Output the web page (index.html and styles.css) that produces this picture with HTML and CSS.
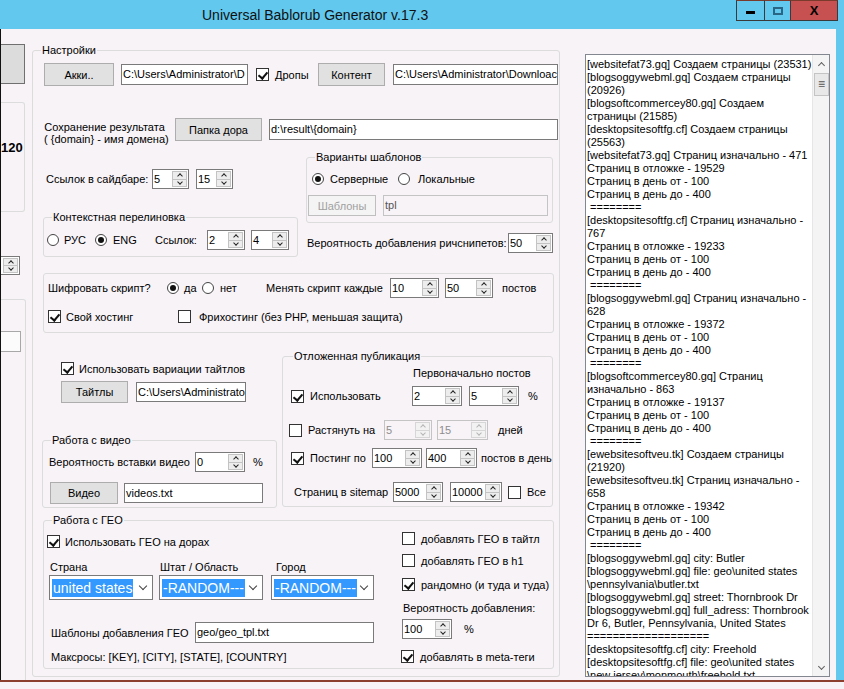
FILE: index.html
```html
<!DOCTYPE html>
<html lang="ru">
<head>
  <meta charset="UTF-8">
  <title>Universal Bablorub Generator v.17.3</title>
  <link rel="stylesheet" href="styles.css">
</head>
<body>
<div class="window">
  <!--заголовок окна-->
  <div class="titlebar">
    <div class="title">Universal Bablorub Generator v.17.3</div>
    <div class="sysbtns">
      <div class="sysbtn min"><i></i></div>
      <div class="sysbtn max"><i></i></div>
      <div class="sysbtn close">X</div>
    </div>
  </div>

  <div class="client">
    <!--левая панель, обрезана краем экрана-->
    <div class="side">
      <div class="s-btn"></div>
      <div class="s-grp">120</div>
      <div class="s-spin"><b class="arr"><i class="up"></i><i class="dn"></i></b></div>
      <div class="s-grp2"><div class="s-tb"></div></div>
    </div>

    <!--настройки-->
    <div class="grp main">
      <div class="cap">Настройки</div>

      <div class="row-a">
        <div class="btn b-akki">Акки..</div>
        <div class="tb t-akki">C:\Users\Administrator\D</div>
        <i class="cb on cb-drop"></i>
        <span class="l-drop">Дропы</span>
        <div class="btn b-kont">Контент</div>
        <div class="tb t-kont">C:\Users\Administrator\Downloac</div>
      </div>

      <div class="row-b">
        <div class="l-save">Сохранение результата<br>( {domain} - имя домена)</div>
        <div class="btn b-dir">Папка дора</div>
        <div class="tb t-dir">d:\result\{domain}</div>
      </div>

      <div class="row-c">
        <div class="col-l">
          <div class="links">
            <span class="l-links">Ссылок в сайдбаре:</span>
            <div class="spin w37"><span>5</span><b class="arr"><i class="up"></i><i class="dn"></i></b></div>
            <div class="spin w37 sp-links2"><span>15</span><b class="arr"><i class="up"></i><i class="dn"></i></b></div>
          </div>

          <div class="grp ctx">
            <div class="cap">Контекстная перелиновка</div>
            <div class="ctx-row">
              <i class="rb rb-rus"></i><span class="l-rus">РУС</span>
              <i class="rb on"></i><span class="l-eng">ENG</span>
              <span class="l-cnt">Ссылок:</span>
              <div class="spin w38"><span>2</span><b class="arr"><i class="up"></i><i class="dn"></i></b></div>
              <div class="spin w38 sp-ctx2"><span>4</span><b class="arr"><i class="up"></i><i class="dn"></i></b></div>
            </div>
          </div>
        </div>

        <div class="col-r">
          <div class="grp tpls">
            <div class="cap">Варианты шаблонов</div>
            <div class="tpl-row1">
              <i class="rb on rb-srv"></i><span class="l-srv">Серверные</span>
              <i class="rb"></i><span class="l-loc">Локальные</span>
            </div>
            <div class="tpl-row2">
              <div class="btn off b-tpl">Шаблоны</div>
              <div class="tb off t-tpl">tpl</div>
            </div>
          </div>
          <div class="rich">
            <span class="l-rich">Вероятность добавления ричснипетов:</span>
            <div class="spin w45"><span>50</span><b class="arr"><i class="up"></i><i class="dn"></i></b></div>
          </div>
        </div>
      </div>

      <div class="grp enc">
        <div class="enc-row1">
          <span class="l-enc">Шифровать скрипт?</span>
          <i class="rb on"></i><span class="l-yes">да</span>
          <i class="rb"></i><span class="l-no">нет</span>
          <span class="l-every">Менять скрипт каждые</span>
          <div class="spin w49"><span>10</span><b class="arr"><i class="up"></i><i class="dn"></i></b></div>
          <div class="spin w48 sp-enc2"><span>50</span><b class="arr"><i class="up"></i><i class="dn"></i></b></div>
          <span class="l-posts">постов</span>
        </div>
        <div class="enc-row2">
          <i class="cb on cb-own"></i><span class="l-own">Свой хостинг</span>
          <i class="cb"></i><span class="l-free">Фрихостинг (без PHP, меньшая защита)</span>
        </div>
      </div>

      <div class="row-e">
        <div class="col-l2">
          <div class="ttl-check">
            <i class="cb on cb-ttl"></i><span class="l-ttl">Использовать вариации тайтлов</span>
          </div>
          <div class="ttl-row">
            <div class="btn b-ttl">Тайтлы</div>
            <div class="tb t-ttl">C:\Users\Administrato</div>
          </div>

          <div class="grp video">
            <div class="cap">Работа с видео</div>
            <div class="v-row1">
              <span class="l-vprob">Вероятность вставки видео</span>
              <div class="spin w50"><span>0</span><b class="arr"><i class="up"></i><i class="dn"></i></b></div>
              <span class="l-pct">%</span>
            </div>
            <div class="v-row2">
              <div class="btn b-video">Видео</div>
              <div class="tb t-video">videos.txt</div>
            </div>
          </div>
        </div>

        <div class="col-r2">
          <div class="grp delay">
            <div class="cap">Отложенная публикация</div>
            <div class="first-posts">Первоначально постов</div>
            <div class="d-row1">
              <i class="cb on cb-d1"></i><span class="l-use">Использовать</span>
              <div class="spin w50"><span>2</span><b class="arr"><i class="up"></i><i class="dn"></i></b></div>
              <div class="spin w50 sp-d1"><span>5</span><b class="arr"><i class="up"></i><i class="dn"></i></b></div>
              <span class="l-pct2">%</span>
            </div>
            <div class="d-row2">
              <i class="cb cb-d2"></i><span class="l-stretch">Растянуть на</span>
              <div class="spin off w48"><span>5</span><b class="arr"><i class="up"></i><i class="dn"></i></b></div>
              <div class="spin off w51 sp-d2"><span>15</span><b class="arr"><i class="up"></i><i class="dn"></i></b></div>
              <span class="l-days">дней</span>
            </div>
            <div class="d-row3">
              <i class="cb on cb-d1"></i><span class="l-post">Постинг по</span>
              <div class="spin w50"><span>100</span><b class="arr"><i class="up"></i><i class="dn"></i></b></div>
              <div class="spin w51 sp-d3"><span>400</span><b class="arr"><i class="up"></i><i class="dn"></i></b></div>
              <span class="l-perday">постов в день</span>
            </div>
            <div class="d-row4">
              <span class="l-sitemap">Страниц в sitemap</span>
              <div class="spin w50"><span>5000</span><b class="arr"><i class="up"></i><i class="dn"></i></b></div>
              <div class="spin w52 sp-d4"><span>10000</span><b class="arr"><i class="up"></i><i class="dn"></i></b></div>
              <i class="cb cb-all"></i><span class="l-all">Все</span>
            </div>
          </div>
        </div>
      </div>

      <div class="grp geo">
        <div class="cap">Работа с ГЕО</div>
        <div class="geo-in">
          <div class="geo-l">
            <div class="geo-check">
              <i class="cb on cb-geo"></i><span class="l-geo">Использовать ГЕО на дорах</span>
            </div>
            <div class="geo-labels">
              <span class="l-country">Страна</span>
              <span class="l-state">Штат / Область</span>
              <span>Город</span>
            </div>
            <div class="geo-sel">
              <div class="sel s-country"><span class="hl">united states</span></div>
              <div class="sel s-state"><span class="hl">-RANDOM---</span></div>
              <div class="sel s-city"><span class="hl">-RANDOM---</span></div>
            </div>
            <div class="geo-tpl">
              <span class="l-gtpl">Шаблоны добавления ГЕО</span>
              <div class="tb t-gtpl">geo/geo_tpl.txt</div>
            </div>
            <div class="macros">Максросы: [KEY], [CITY], [STATE], [COUNTRY]</div>
          </div>

          <div class="geo-r">
            <div class="g-r1"><i class="cb"></i><span class="l-gr">добавлять ГЕО в тайтл</span></div>
            <div class="g-r2"><i class="cb"></i><span class="l-gr">добавлять ГЕО в h1</span></div>
            <div class="g-r3"><i class="cb on"></i><span class="l-gr">рандомно (и туда и туда)</span></div>
            <div class="g-prob">Вероятность добавления:</div>
            <div class="g-spin">
              <div class="spin w50"><span>100</span><b class="arr"><i class="up"></i><i class="dn"></i></b></div>
              <span class="l-gpct">%</span>
            </div>
            <div class="g-r4"><i class="cb on"></i><span class="l-gr">добавлять в meta-теги</span></div>
          </div>
        </div>
      </div>
    </div>

    <!--лог-->
    <div class="log">
      <div class="lines">[websitefat73.gq] Создаем страницы (23531)
[blogsoggywebml.gq] Создаем страницы
(20926)
[blogsoftcommercey80.gq] Создаем
страницы (21585)
[desktopsitesoftfg.cf] Создаем страницы
(25563)
[websitefat73.gq] Страниц изначально - 471
Страниц в отложке - 19529
Страниц в день от - 100
Страниц в день до - 400
 ========
[desktopsitesoftfg.cf] Страниц изначально -
767
Страниц в отложке - 19233
Страниц в день от - 100
Страниц в день до - 400
 ========
[blogsoggywebml.gq] Страниц изначально -
628
Страниц в отложке - 19372
Страниц в день от - 100
Страниц в день до - 400
 ========
[blogsoftcommercey80.gq] Страниц
изначально - 863
Страниц в отложке - 19137
Страниц в день от - 100
Страниц в день до - 400
 ========
[ewebsitesoftveu.tk] Создаем страницы
(21920)
[ewebsitesoftveu.tk] Страниц изначально -
658
Страниц в отложке - 19342
Страниц в день от - 100
Страниц в день до - 400
 ========
[blogsoggywebml.gq] city: Butler
[blogsoggywebml.gq] file: geo\united states
\pennsylvania\butler.txt
[blogsoggywebml.gq] street: Thornbrook Dr
[blogsoggywebml.gq] full_adress: Thornbrook
Dr 6, Butler, Pennsylvania, United States
===================
[desktopsitesoftfg.cf] city: Freehold
[desktopsitesoftfg.cf] file: geo\united states
\new jersey\monmouth\freehold.txt</div>
      <div class="vscroll">
        <div class="sb-up"><i></i></div>
        <div class="sb-thumb">≡</div>
        <div class="sb-track"></div>
        <div class="sb-dn"><i></i></div>
      </div>
    </div>
  </div>
  <div class="bottom"></div>
</div>
</body>
</html>
```

FILE: styles.css
```css
*{box-sizing:border-box;}
body{margin:0;font:11px "Liberation Sans",Arial,sans-serif;color:#000;}

.window{
  width:844px;
  height:689px;
  overflow:hidden;
  background:#62c8ee;
}

/* заголовок */
.titlebar{
  display:flex;
  align-items:flex-start;
  height:29px;
}
.title{
  padding-left:202px;
  line-height:30px;
  font-size:14px;
  color:#111;
}
.sysbtns{
  display:flex;
  margin:0 6px 0 auto;
}
.sysbtn{
  display:flex;
  align-items:center;
  justify-content:center;
  height:21px;
  border:1px solid #3a3a3a;
  border-top-color:#7a3a2c;
}
.sysbtn + .sysbtn{border-left:none;}
.sysbtn.min{width:29px;}
.sysbtn.max{width:26px;}
.sysbtn.close{
  width:47px;
  background:#c75050;
  font:bold 13px "Liberation Sans",Arial,sans-serif;
}
.sysbtn.min i{width:9px;height:3px;margin-top:4px;background:#000;}
.sysbtn.max i{width:10px;height:8px;border:2px solid #2a6585;}

/* клиентская область */
.client{
  display:flex;
  align-items:flex-start;
  width:836px;
  height:651px;
  background:#f7f3f7;
  border-left:1px solid #111;
}
.bottom{
  height:9px;
  background:#f7f3f7;
  border-top:2px solid #8c3f2e;
}

/* левая обрезанная панель */
.side{
  flex-shrink:0;
  width:31px;
  height:651px;
  overflow:hidden;
}
.s-btn{
  width:24px;
  height:40px;
  margin-top:15px;
  background:#dcdcdc;
  border:1px solid #707070;
  border-left:none;
}
.s-grp{
  width:24px;
  height:110px;
  margin-top:18px;
  padding:37px 4px 0 0;
  border:1px solid #dcdcdc;
  border-left:none;
  border-radius:0 3px 3px 0;
  text-align:right;
  font-size:13px;
  line-height:15px;
  font-weight:bold;
}
.s-spin{
  display:flex;
  justify-content:flex-end;
  width:19px;
  height:19px;
  margin-top:44px;
  border:1px solid #7a7a7a;
  border-left:none;
  background:#fff;
}
.s-grp2{
  width:25px;
  height:400px;
  margin-top:24px;
  padding-top:31px;
  border:1px solid #dcdcdc;
  border-left:none;
  border-radius:0 3px 0 0;
}
.s-tb{
  width:20px;
  height:21px;
  border:1px solid #a8a8a8;
  border-left:none;
  background:#fbfbfb;
}

/* общие элементы */
.grp{
  border:1px solid #dcdcdc;
  border-radius:3px;
}
.cap{
  width:fit-content;
  margin:-7px 0 0 8px;
  padding:0 1px;
  line-height:13px;
  background:#f7f3f7;
}
.btn{
  display:flex;
  align-items:center;
  justify-content:center;
  height:23px;
  background:#e1e1e1;
  border:1px solid #adadad;
  white-space:nowrap;
}
.btn.off{background:#f4f4f4;border-color:#bfbfbf;color:#a0a0a0;}
.tb{
  height:21px;
  padding-left:1px;
  line-height:19px;
  background:#fff;
  border:1px solid #7a7a7a;
  white-space:nowrap;
  overflow:hidden;
}
.tb.off{background:#f7f3f7;border-color:#c4c4c4;color:#555;}
.cb{
  flex-shrink:0;
  display:block;
  width:13px;
  height:13px;
  background:#fff;
  border:1px solid #333;
}
.cb.on::after{
  content:"";
  display:block;
  width:4px;
  height:7px;
  margin:1px 0 0 3px;
  border:solid #111;
  border-width:0 2px 2px 0;
  transform:rotate(40deg);
}
.rb{
  flex-shrink:0;
  display:block;
  width:12px;
  height:12px;
  background:#fff;
  border:1px solid #444;
  border-radius:50%;
}
.rb.on::after{
  content:"";
  display:block;
  width:6px;
  height:6px;
  margin:2px;
  background:#111;
  border-radius:50%;
}
.spin{
  flex-shrink:0;
  display:flex;
  height:20px;
  background:#fff;
  border:1px solid #7a7a7a;
}
.spin span{
  flex:1;
  padding-left:1px;
  line-height:18px;
  white-space:nowrap;
  overflow:hidden;
}
.spin.off{background:#f7f3f7;border-color:#c4c4c4;color:#8d8d8d;}
.arr{
  display:flex;
  flex-direction:column;
  width:16px;
  padding:1px 1px 1px 0;
}
.arr i{
  flex:1;
  display:flex;
  align-items:center;
  justify-content:center;
  background:#ededed;
  border:1px solid #c3c3c3;
}
.arr i + i{border-top:none;}
.arr i::after{
  content:"";
  width:3px;
  height:3px;
  border-left:1px solid #222;
  border-top:1px solid #222;
}
.arr .up::after{transform:rotate(45deg);margin-top:2px;}
.arr .dn::after{transform:rotate(225deg);margin-top:-2px;}
.spin.off .arr i::after{border-color:#b5b5b5;}
.spin.off .arr i{background:#f2f2f2;border-color:#d6d6d6;}
.sel{
  display:flex;
  align-items:center;
  height:25px;
  padding-left:2px;
  background:#fff;
  border:1px solid #7a7a7a;
}
.sel .hl{
  padding:0 1px;
  font-size:14px;
  line-height:18px;
  color:#fff;
  background:#3399ff;
  white-space:nowrap;
}
.sel::after{
  content:"";
  flex-shrink:0;
  width:5px;
  height:5px;
  margin:-3px 6px 0 auto;
  border-right:1px solid #444;
  border-bottom:1px solid #444;
  transform:rotate(45deg);
}
.w37{width:37px;}
.w38{width:38px;}
.w45{width:45px;}
.w48{width:48px;}
.w49{width:49px;}
.w50{width:50px;}
.w51{width:51px;}
.w52{width:52px;}
span{white-space:nowrap;}

/* группа Настройки */
.main{
  flex-shrink:0;
  width:528px;
  height:627px;
  margin-top:21px;
}
.row-a{
  display:flex;
  align-items:center;
  height:23px;
  margin-top:6px;
}
.b-akki{margin-left:11px;width:70px;}
.t-akki{margin-left:7px;width:127px;}
.cb-drop{margin-left:8px;}
.l-drop{margin-left:6px;width:43px;}
.b-kont{width:67px;}
.t-kont{margin-left:8px;width:165px;}

.row-b{
  display:flex;
  align-items:flex-start;
  height:23px;
  margin-top:32px;
}
.l-save{
  width:121px;
  margin:3px 0 0 11px;
  line-height:12px;
  text-align:center;
  white-space:nowrap;
}
.b-dir{margin-left:10px;width:87px;}
.t-dir{margin:1px 0 0 7px;width:289px;}

.row-c{display:flex;align-items:flex-start;}
.col-l{width:255px;margin-left:10px;}
.links{
  display:flex;
  align-items:center;
  height:20px;
  margin-top:28px;
}
.l-links{margin-left:3px;width:106px;}
.sp-links2{margin-left:7px;}
.ctx{height:40px;margin-top:28px;}
.ctx-row{
  display:flex;
  align-items:center;
  height:20px;
  margin-top:6px;
}
.rb-rus{margin-left:3px;}
.l-rus{margin-left:5px;width:31px;}
.l-eng{margin-left:6px;width:42px;}
.l-cnt{width:52px;}
.sp-ctx2{margin-left:6px;}

.col-r{width:247px;margin-left:8px;}
.tpls{height:66px;margin-top:16px;}
.tpl-row1{
  display:flex;
  align-items:center;
  height:16px;
  margin-top:7px;
}
.rb-srv{margin-left:5px;}
.l-srv{margin-left:6px;width:68px;}
.l-loc{margin-left:8px;}
.tpl-row2{
  display:flex;
  align-items:center;
  height:21px;
  margin-top:8px;
}
.b-tpl{margin-left:1px;width:68px;height:21px;}
.t-tpl{margin-left:7px;width:165px;}
.rich{
  display:flex;
  align-items:center;
  height:20px;
  margin-top:10px;
}
.l-rich{margin-left:1px;width:201px;}

.enc{width:511px;height:60px;margin:16px 0 0 10px;}
.enc-row1{
  display:flex;
  align-items:center;
  height:20px;
  margin-top:4px;
}
.l-enc{margin-left:4px;width:119px;}
.l-yes{margin-left:5px;width:18px;}
.l-no{margin-left:6px;width:46px;}
.l-every{width:124px;}
.sp-enc2{margin-left:6px;}
.l-posts{margin-left:9px;}
.enc-row2{
  display:flex;
  align-items:center;
  height:13px;
  margin-top:12px;
}
.cb-own{margin-left:4px;}
.l-own{margin-left:5px;width:112px;}
.l-free{margin-left:8px;}

.row-e{display:flex;align-items:flex-start;}
.col-l2{width:235px;margin-left:9px;}
.ttl-check{
  display:flex;
  align-items:center;
  height:13px;
  margin-top:29px;
}
.cb-ttl{margin-left:19px;}
.l-ttl{margin-left:5px;}
.ttl-row{
  display:flex;
  align-items:center;
  height:22px;
  margin-top:6px;
}
.b-ttl{margin-left:19px;width:67px;height:22px;}
.t-ttl{margin-left:8px;width:110px;height:20px;line-height:18px;}
.video{height:68px;margin-top:37px;}
.v-row1{
  display:flex;
  align-items:center;
  height:20px;
  margin-top:5px;
}
.l-vprob{margin-left:6px;width:146px;}
.l-pct{margin-left:8px;}
.v-row2{
  display:flex;
  align-items:center;
  height:22px;
  margin-top:10px;
}
.b-video{margin-left:7px;width:68px;height:22px;}
.t-video{margin-left:6px;width:139px;height:20px;line-height:18px;}

.col-r2{width:271px;margin-left:5px;}
.delay{height:151px;margin-top:23px;}
.delay .cap{margin-left:10px;}
.first-posts{margin:4px 0 0 130px;line-height:13px;}
.d-row1,.d-row2,.d-row3,.d-row4{
  display:flex;
  align-items:center;
  height:20px;
}
.d-row1{margin-top:6px;}
.d-row2{margin-top:14px;}
.d-row3{margin-top:8px;}
.d-row4{margin-top:14px;}
.cb-d1{margin-left:8px;}
.cb-d2{margin-left:6px;}
.l-use{margin-left:6px;width:102px;}
.sp-d1{margin-left:7px;}
.l-pct2{margin-left:9px;}
.l-stretch{margin-left:6px;width:76px;}
.sp-d2{margin-left:5px;}
.l-days{margin-left:10px;}
.l-post{margin-left:6px;width:62px;}
.sp-d3{margin-left:4px;}
.l-perday{margin-left:4px;}
.l-sitemap{margin-left:11px;width:99px;}
.sp-d4{margin-left:7px;}
.cb-all{margin-left:6px;}
.l-all{margin-left:6px;}

/* ГЕО */
.geo{width:511px;height:149px;margin:12px 0 0 10px;}
.geo-in{display:flex;}
.geo-l{width:357px;}
.geo-check{
  display:flex;
  align-items:center;
  height:13px;
  margin-top:8px;
}
.cb-geo{margin-left:3px;}
.l-geo{margin-left:5px;}
.geo-labels{
  display:flex;
  margin-top:13px;
  line-height:13px;
}
.l-country{margin-left:6px;width:110px;}
.l-state{width:116px;}
.geo-sel{
  display:flex;
  margin-top:1px;
}
.s-country{margin-left:5px;width:104px;}
.s-state{margin-left:6px;width:104px;}
.s-city{margin-left:8px;width:103px;}
.geo-tpl{
  display:flex;
  align-items:center;
  height:21px;
  margin-top:22px;
}
.l-gtpl{margin-left:7px;width:144px;}
.t-gtpl{width:179px;}
.macros{margin:8px 0 0 7px;line-height:13px;}

.geo-r{flex:1;}
.g-r1,.g-r2,.g-r3,.g-r4{
  display:flex;
  align-items:center;
  height:13px;
}
.g-r1{margin:5px 0 0 1px;}
.g-r2{margin:9px 0 0 1px;}
.g-r3{margin:11px 0 0 1px;}
.g-r4{margin-top:11px;}
.l-gr{margin-left:6px;}
.g-prob{margin:11px 0 0 2px;line-height:13px;}
.g-spin{
  display:flex;
  align-items:center;
  height:20px;
  margin:4px 0 0 1px;
}
.l-gpct{margin-left:12px;}

/* лог */
.log{
  flex-shrink:0;
  display:flex;
  width:245px;
  height:623px;
  margin:25px 0 0 25px;
  background:#fff;
  border:1px solid #828790;
  overflow:hidden;
}
.lines{
  flex:1;
  height:100%;
  padding:3px 0 0 1px;
  line-height:13px;
  white-space:pre;
  overflow:hidden;
}
.vscroll{
  flex-shrink:0;
  display:flex;
  flex-direction:column;
  width:17px;
  height:100%;
  background:#f4f4f4;
  border-left:1px solid #e6e6e6;
}
.sb-up,.sb-dn{
  display:flex;
  align-items:center;
  justify-content:center;
  height:17px;
}
.sb-up i,.sb-dn i{
  width:5px;
  height:5px;
  border-left:1px solid #606060;
  border-top:1px solid #606060;
}
.sb-up i{transform:rotate(45deg);margin-top:3px;}
.sb-dn i{transform:rotate(225deg);margin-top:-3px;}
.sb-thumb{
  height:23px;
  margin:1px 0 0 1px;
  background:#e8e8e8;
  border:1px solid #c4c4c4;
  text-align:center;
  line-height:20px;
  font-size:12px;
  color:#555;
}
.sb-track{flex:1;}
```
